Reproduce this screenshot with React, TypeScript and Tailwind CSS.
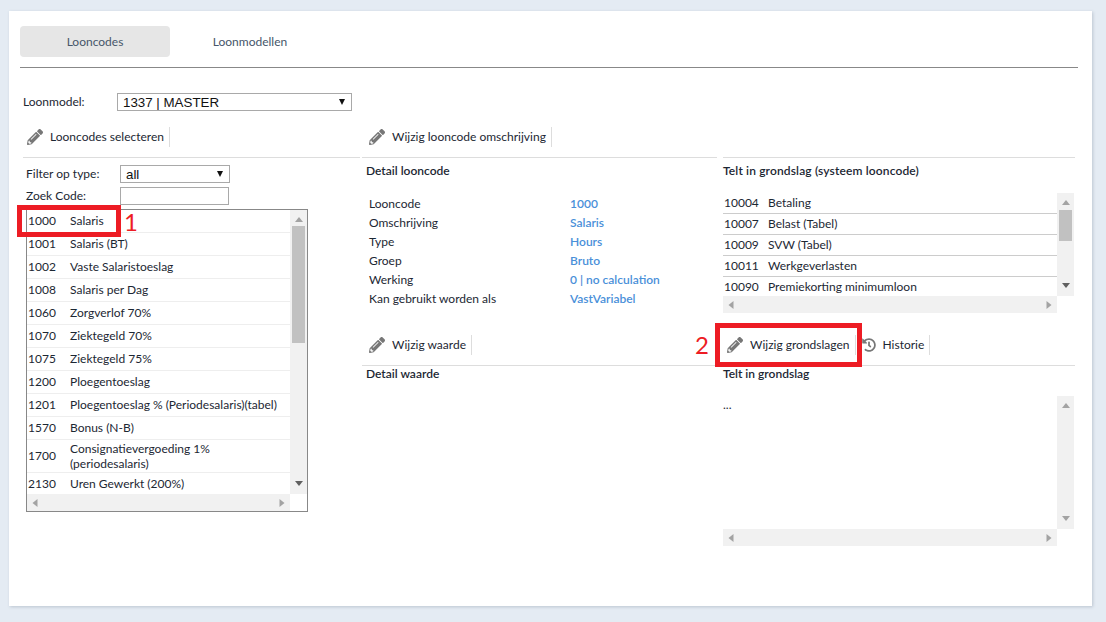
import { FaPencilAlt, FaHistory } from 'react-icons/fa';

const looncodes: [string, string][] = [
  ['1000', 'Salaris'],
  ['1001', 'Salaris (BT)'],
  ['1002', 'Vaste Salaristoeslag'],
  ['1008', 'Salaris per Dag'],
  ['1060', 'Zorgverlof 70%'],
  ['1070', 'Ziektegeld 70%'],
  ['1075', 'Ziektegeld 75%'],
  ['1200', 'Ploegentoeslag'],
  ['1201', 'Ploegentoeslag % (Periodesalaris)(tabel)'],
  ['1570', 'Bonus (N-B)'],
  ['1700', 'Consignatievergoeding 1% (periodesalaris)'],
  ['2130', 'Uren Gewerkt (200%)'],
];

const grondslag: [string, string][] = [
  ['10004', 'Betaling'],
  ['10007', 'Belast (Tabel)'],
  ['10009', 'SVW (Tabel)'],
  ['10011', 'Werkgeverlasten'],
  ['10090', 'Premiekorting minimumloon'],
];

const details: [string, string][] = [
  ['Looncode', '1000'],
  ['Omschrijving', 'Salaris'],
  ['Type', 'Hours'],
  ['Groep', 'Bruto'],
  ['Werking', '0 | no calculation'],
  ['Kan gebruikt worden als', 'VastVariabel'],
];

function Arrow({ dir, dark }: { dir: 'up' | 'down' | 'left' | 'right'; dark?: boolean }) {
  const points = {
    up: '0,5 8,5 4,0',
    down: '0,0 8,0 4,5',
    left: '5,0 5,8 0,4',
    right: '0,0 0,8 5,4',
  }[dir];
  return (
    <svg width="8" height="8" viewBox="0 0 8 8" className="block">
      <polygon points={points} fill={dark ? '#606060' : '#a3a3a3'} transform={dir === 'up' || dir === 'down' ? 'translate(0 1)' : 'translate(1.5 0)'} />
    </svg>
  );
}

function VScroll({ thumbTop, thumbHeight }: { thumbTop?: number; thumbHeight?: number }) {
  return (
    <div className="w-[17px] shrink-0 bg-[#f1f1f1] flex flex-col items-center justify-between py-[6px] relative">
      <Arrow dir="up" />
      {thumbHeight ? (
        <div
          className="absolute left-[2px] w-[13px] bg-[#c1c1c1]"
          style={{ top: thumbTop, height: thumbHeight }}
        />
      ) : null}
      <Arrow dir="down" dark={!!thumbHeight} />
    </div>
  );
}

function HScroll() {
  return (
    <div className="flex-1 h-[17px] bg-[#f1f1f1] flex items-center justify-between px-[4px]">
      <Arrow dir="left" />
      <Arrow dir="right" />
    </div>
  );
}

function Toolbar({ children, className }: { children?: React.ReactNode; className?: string }) {
  return (
    <div className={`h-[31px] border-b border-[#ddd] flex items-start text-[12px] text-[#1c2733] ${className ?? ''}`}>
      {children}
    </div>
  );
}

function ToolItem({ label, history }: { label: string; history?: boolean }) {
  return (
    <div className="flex items-center h-[20px] border-r border-[#ddd]">
      {history ? (
        <FaHistory className="w-[14px] h-[14px] text-[#777] ml-[6px] mr-[7px]" />
      ) : (
        <FaPencilAlt className="w-[16px] h-[16px] text-[#777] ml-[4px] mr-[7px]" />
      )}
      <span className="pr-[5px] whitespace-nowrap">{label}</span>
    </div>
  );
}

export default function App() {
  return (
    <div className="h-[622px] overflow-hidden bg-[#e4ebf3] pt-[11px] pl-[9px] [font-family:Lato,sans-serif] text-[12px] text-[#1c2733]">
      <div className="relative w-[1083px] h-[595px] bg-white shadow-[1px_1px_3px_#bcc5d0] px-[11px] pt-[15px]">
        {/* tabs */}
        <div className="flex h-[41px] w-[1058px] border-b border-[#888] box-content">
          <div className="w-[150px] h-[31px] rounded-[4px] bg-[#e6e6e6] flex items-center justify-center text-[#46566a]">
            Looncodes
          </div>
          <div className="w-[160px] h-[31px] flex items-center justify-center text-[#46566a]">
            Loonmodellen
          </div>
        </div>

        {/* loonmodel */}
        <div className="flex items-center mt-[25px] pl-[3px] h-[18px]">
          <label className="w-[94px]">Loonmodel:</label>
          <div className="relative w-[235px] h-[18px]">
            <select className="appearance-none w-full h-full border border-[#a9a9a9] pl-[5px] pt-[1px] text-[13.33px] leading-[16px] text-[#111] [font-family:'Liberation_Sans',sans-serif] outline-none">
              <option>1337 | MASTER</option>
            </select>
            <span className="absolute right-[7px] top-[6px] w-0 h-0 border-l-[3.5px] border-r-[3.5px] border-t-[6px] border-l-transparent border-r-transparent border-t-[#111]" />
          </div>
        </div>

        <div className="flex mt-[16px]">
          {/* left column */}
          <div className="w-[340px] pl-[3px]">
            <Toolbar>
              <ToolItem label="Looncodes selecteren" />
            </Toolbar>
            <div className="pl-[3px]">
              <div className="flex items-center h-[18px] mt-[7px]">
                <label className="w-[94px]">Filter op type:</label>
                <div className="relative w-[110px] h-[18px]">
                  <select className="appearance-none w-full h-full border border-[#a9a9a9] pl-[5px] pt-[1px] text-[13.33px] leading-[16px] text-[#111] [font-family:'Liberation_Sans',sans-serif] outline-none">
                    <option>all</option>
                  </select>
                  <span className="absolute right-[7px] top-[6px] w-0 h-0 border-l-[3.5px] border-r-[3.5px] border-t-[6px] border-l-transparent border-r-transparent border-t-[#111]" />
                </div>
              </div>
              <div className="flex items-center h-[18px] mt-[4px]">
                <label className="w-[94px]">Zoek Code:</label>
                <input className="w-[109px] h-[18px] border border-[#a9a9a9] outline-none" />
              </div>

              <div className="mt-[4px] w-[282px] h-[303px] border border-[#888] flex flex-col">
                <div className="flex h-[284px]">
                  <div className="flex-1 overflow-hidden">
                    {looncodes.map(([code, name]) => (
                      <div
                        key={code}
                        className={`flex items-center border-b border-[#eee] pl-[1px] pb-[1px] leading-[15px] ${code === '1700' ? 'h-[33px]' : 'h-[23px]'}`}
                      >
                        <span className="w-[42px] shrink-0">{code}</span>
                        <span>{name}</span>
                      </div>
                    ))}
                  </div>
                  <VScroll thumbTop={16} thumbHeight={117} />
                </div>
                <div className="flex">
                  <HScroll />
                  <div className="w-[17px]" />
                </div>
              </div>
            </div>
          </div>

          {/* right column */}
          <div className="w-[718px] pl-[2px]">
            <div className="flex gap-[6px] h-[208px]">
              <div className="w-[355px]">
                <Toolbar className="pl-[3px]">
                  <ToolItem label="Wijzig looncode omschrijving" />
                </Toolbar>
                <div className="font-semibold mt-[5px] pl-[4px] leading-[15px]">Detail looncode</div>
                <div className="mt-[16px] pl-[7px]">
                  {details.map(([label, value]) => (
                    <div key={label} className="flex h-[19px] items-center">
                      <span className="w-[201px]">{label}</span>
                      <span className="text-[#4a90d9] font-semibold">{value}</span>
                    </div>
                  ))}
                </div>
              </div>
              <div className="w-[352px]">
                <Toolbar />
                <div className="font-semibold mt-[5px] leading-[15px] tracking-[0.14px]">Telt in grondslag (systeem looncode)</div>
                <div className="mt-[15px] w-[351px] h-[120px] flex flex-col">
                  <div className="flex h-[103px]">
                    <div className="flex-1 overflow-hidden">
                      {grondslag.map(([code, name]) => (
                        <div key={code} className="flex items-center h-[21px] border-b border-[#ccc] pl-[1px]">
                          <span className="w-[44px] shrink-0">{code}</span>
                          <span>{name}</span>
                        </div>
                      ))}
                    </div>
                    <VScroll thumbTop={17} thumbHeight={31} />
                  </div>
                  <div className="flex">
                    <HScroll />
                    <div className="w-[17px]" />
                  </div>
                </div>
              </div>
            </div>

            <div className="flex gap-[6px]">
              <div className="w-[355px]">
                <Toolbar className="pl-[3px]">
                  <ToolItem label="Wijzig waarde" />
                </Toolbar>
                <div className="font-semibold pl-[4px] leading-[15px]">Detail waarde</div>
              </div>
              <div className="w-[352px]">
                <Toolbar>
                  <ToolItem label="Wijzig grondslagen" />
                  <ToolItem label="Historie" history />
                </Toolbar>
                <div className="font-semibold leading-[15px]">Telt in grondslag</div>
                <div className="mt-[15px] w-[351px] h-[150px] flex flex-col">
                  <div className="flex h-[133px]">
                    <div className="flex-1 pt-[1px] leading-[15px]">...</div>
                    <VScroll />
                  </div>
                  <div className="flex">
                    <HScroll />
                    <div className="w-[17px]" />
                  </div>
                </div>
              </div>
            </div>
          </div>
        </div>

        {/* annotations */}
        <div className="absolute left-[8px] top-[194px] w-[104px] h-[32px] border-[5px] border-[#ed1c24]" />
        <span className="absolute left-[115px] top-[196px] text-[24px] leading-[30px] text-[#ed1c24]">1</span>
        <div className="absolute left-[706px] top-[312px] w-[147px] h-[44px] border-[5px] border-[#ed1c24]" />
        <span className="absolute left-[686px] top-[319px] text-[24px] leading-[30px] text-[#ed1c24]">2</span>
      </div>
    </div>
  );
}
